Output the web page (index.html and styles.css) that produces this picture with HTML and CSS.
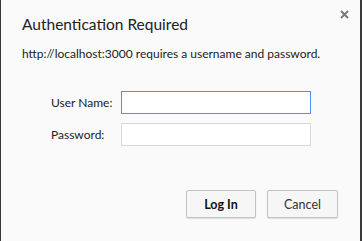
FILE: index.html
```html
<!DOCTYPE html>
<html lang="en">

<head>
    <meta charset="UTF-8">
    <title>Authentication Required</title>
    <link rel="stylesheet" href="styles.css">
</head>

<body>
    <div class="dialog">
        <header class="head">
            <h1>Authentication Required</h1>
            <span class="close">
                <svg width="9" height="9" viewBox="0 0 9 9">
                    <path d="M1 1L8 8M8 1L1 8" stroke="#7a7a7a" stroke-width="2" />
                </svg>
            </span>
        </header>
        <p class="msg">http://localhost:3000 requires a username and password.</p>
        <form class="form">
            <div class="row">
                <label for="user">User Name:</label>
                <input id="user" class="field focus" type="text">
            </div>
            <div class="row">
                <label for="pass">Password:</label>
                <input id="pass" class="field" type="password">
            </div>
        </form>
        <footer class="actions">
            <button class="btn btn-primary" type="button">Log In</button>
            <button class="btn" type="button">Cancel</button>
        </footer>
    </div>
</body>

</html>
```

FILE: styles.css
```css
html,
body {
    margin: 0;
    height: 100%;
}

body {
    font-family: Lato, "Open Sans", sans-serif;
    color: #222;
    background-color: #fafafa;
}

.dialog {
    box-sizing: border-box;
    height: 241px;
    border-left: 1px solid #3a3a3a;
    border-right: 2px solid #3a3a3a;
    background-color: #fafafa;
}

.head {
    display: flex;
    justify-content: space-between;
    padding: 0 11px 0 21px;
}

.head h1 {
    margin: 14px 0 0;
    font-size: 15.5px;
    font-weight: normal;
    line-height: 20px;
}

.close {
    margin-top: 10px;
    height: 9px;
    line-height: 0;
}

.msg {
    margin: 12px 0 0 21px;
    font-size: 12px;
    line-height: 16px;
}

.form {
    display: flex;
    flex-direction: column;
    gap: 9px;
    margin: 29px 0 0 50px;
}

.row {
    display: flex;
    align-items: center;
}

.row label {
    width: 70px;
    font-size: 12px;
}

.field {
    box-sizing: border-box;
    width: 190px;
    height: 23px;
    margin: 0;
    border: 1px solid #d9d9d9;
    background-color: #fff;
    outline: none;
}

.field.focus {
    border-color: #4d90fe;
}

.actions {
    display: flex;
    justify-content: flex-end;
    gap: 11px;
    margin: 44px 22px 0 0;
}

.btn {
    box-sizing: border-box;
    width: 71px;
    height: 28px;
    border: 1px solid #c3c3c3;
    border-radius: 2px;
    background-color: #f6f6f6;
    box-shadow: 0 1px 1px rgba(0, 0, 0, 0.12);
    font-family: inherit;
    font-size: 12.5px;
    color: #333;
}

.btn-primary {
    width: 70px;
    font-weight: bold;
    color: #111;
}
```
